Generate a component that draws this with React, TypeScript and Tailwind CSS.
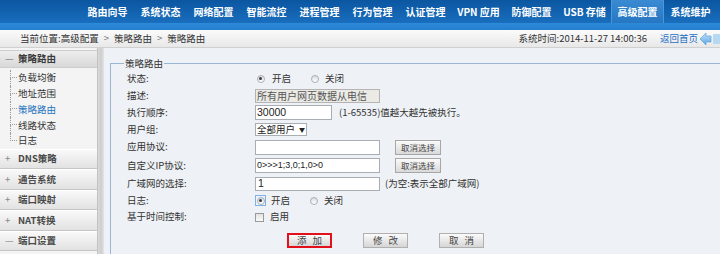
import React from 'react';

const navItems = [
  '路由向导',
  '系统状态',
  '网络配置',
  '智能流控',
  '进程管理',
  '行为管理',
  '认证管理',
  'VPN 应用',
  '防御配置',
  'USB 存储',
  '高级配置',
  '系统维护',
];

const treeItems = ['负载均衡', '地址范围', '策略路由', '线路状态', '日志'];
const sections = ['DNS策略', '通告系统', '端口映射', 'NAT转换'];

const Radio: React.FC<{ checked?: boolean; focus?: boolean }> = ({ checked, focus }) => (
  <span
    className={`flex h-[11px] w-[11px] shrink-0 items-center justify-center ${
      focus ? 'border border-[#7fb2e6] bg-[#eaf3fc]' : ''
    }`}
  >
    <span className="flex h-[8px] w-[8px] items-center justify-center rounded-full border border-[#a9b0b8] bg-gradient-to-b from-[#dcdcdc] to-[#ffffff]">
      {checked && <span className="h-[3px] w-[3px] rounded-full bg-[#3a3a3a]" />}
    </span>
  </span>
);

const Row: React.FC<{ label: string; h: string; children?: React.ReactNode }> = ({ label, h, children }) => (
  <div className={`flex items-center ${h}`}>
    <div className="w-[128px] shrink-0">{label}</div>
    <div className="flex items-center">{children}</div>
  </div>
);

const SmallButton: React.FC = () => (
  <div className="ml-[15px] flex h-[15px] w-[46px] items-center justify-center border border-[#a7a7a7] bg-gradient-to-b from-[#fbfbfb] to-[#d9d9d9] text-[8.5px] text-[#444]">
    取消选择
  </div>
);

const ActionButton: React.FC<{ a: string; b: string; active?: boolean }> = ({ a, b, active }) => (
  <div
    className={`flex h-[15px] w-[45px] items-center justify-center gap-[6px] bg-gradient-to-b from-[#fbfbfb] to-[#d6d6d6] text-[#444] ${
      active ? 'border-2 border-[#e3101b]' : 'border border-[#b0b0b0]'
    }`}
  >
    <span>{a}</span>
    <span>{b}</span>
  </div>
);

export default function App() {
  return (
    <div className="h-[254px] w-[720px] overflow-hidden bg-[#eef1f5] font-['Noto_Sans_CJK_SC',sans-serif] text-[9.5px] leading-none text-[#333]">
      {/* top nav */}
      <header>
        <div className="flex h-[23px] bg-gradient-to-b from-[#0b56a1] to-[#196ebd] pl-[81px]">
          {navItems.map((item) => (
            <div
              key={item}
              className={`flex w-[53px] shrink-0 items-center justify-center text-[10px] font-bold text-white ${
                item === '高级配置' ? 'border-x border-[#4a98dc] bg-gradient-to-b from-[#3a8bd3] to-[#2676c2]' : ''
              }`}
            >
              {item}
            </div>
          ))}
        </div>
        <div className="h-[7px] bg-gradient-to-b from-[#2d8ad8] to-[#2480cf]" />
      </header>

      {/* breadcrumb */}
      <div className="flex h-[18px] items-center border-b border-[#d0d0d0] bg-gradient-to-b from-[#fbfbfb] to-[#e8e8e8] pl-[20px]">
        <span>当前位置:高级配置</span>
        <span className="mx-[5px] text-[#777]">&gt;</span>
        <span>策略路由</span>
        <span className="mx-[5px] text-[#777]">&gt;</span>
        <span>策略路由</span>
        <span className="ml-auto">系统时间:2014-11-27 14:00:36</span>
        <span className="ml-[13px] text-[#1f6fc5]">返回首页</span>
        <svg className="ml-[2px] h-[16px] w-[20px] shrink-0" viewBox="0 0 20 16">
          <defs>
            <linearGradient id="arr" x1="0" y1="0" x2="0" y2="1">
              <stop offset="0" stopColor="#c4e2fa" />
              <stop offset="1" stopColor="#5aa6e4" />
            </linearGradient>
          </defs>
          <polygon points="0,8 6,2 6,5 11,5 11,11 6,11 6,14" fill="url(#arr)" stroke="#4f9ad8" strokeWidth="0.6" />
          <rect x="13" y="3" width="7" height="10" rx="1" fill="#a9d2f3" opacity="0.8" />
        </svg>
      </div>

      <div className="flex h-[206px]">
        {/* sidebar */}
        <aside className="w-[97px] shrink-0 bg-[#f4f4f4] pt-[2px]">
          <div className="flex h-[18px] items-center border-y border-[#cdcdcd] bg-gradient-to-b from-[#eeeeee] to-[#d8d8d8] pl-[5px] font-bold text-[#3a3a3a]">
            <span className="w-[13px] font-normal text-[#777]">—</span>
            <span>策略路由</span>
          </div>
          <ul className="pl-[10px] pt-[2px]">
            {treeItems.map((t, i) => (
              <li key={t} className="flex h-[15.8px] items-center">
                <span className="flex w-[7px] flex-col self-stretch">
                  <span className="h-1/2 border-b border-l border-dotted border-[#9a9a9a]" />
                  <span
                    className={`h-1/2 ${i === treeItems.length - 1 ? '' : 'border-l border-dotted border-[#9a9a9a]'}`}
                  />
                </span>
                <span className={`ml-[1px] ${t === '策略路由' ? 'text-[#1e72c0]' : ''}`}>{t}</span>
              </li>
            ))}
          </ul>
          {sections.map((s) => (
            <div
              key={s}
              className="flex h-[20.5px] items-center border-b border-t border-b-[#c6c6c6] border-t-white bg-gradient-to-b from-[#f9f9f9] to-[#e2e2e2] pl-[5px] font-bold text-[#4a4a4a]"
            >
              <span className="w-[13px] font-normal text-[#888]">+</span>
              <span>{s}</span>
            </div>
          ))}
          <div className="flex h-[20.5px] items-center border-b border-t border-b-[#c6c6c6] border-t-white bg-gradient-to-b from-[#f9f9f9] to-[#e2e2e2] pl-[5px] font-bold text-[#4a4a4a]">
            <span className="w-[13px] font-normal text-[#888]">—</span>
            <span>端口设置</span>
          </div>
        </aside>

        {/* splitter */}
        <div className="w-[7px] shrink-0 border-l border-[#c2c2c2] bg-gradient-to-r from-[#dadada] via-[#cdcdcd] to-[#e4e4e4]" />

        {/* content */}
        <main className="flex-1 overflow-hidden bg-[#eef1f5]">
          <fieldset className="ml-[6px] mt-[9px] w-[620px] border border-[#9ab6d5] pb-[20px]">
            <legend className="ml-[13px] px-[1px] leading-[12px]">策略路由</legend>
            <div className="pl-[16px] pt-[1px]">
              <Row label="状态:" h="h-[17px]">
                <Radio checked />
                <span className="ml-[6px]">开启</span>
                <span className="ml-[18px]"><Radio /></span>
                <span className="ml-[5px]">关闭</span>
              </Row>
              <Row label="描述:" h="h-[17px]">
                <div className="flex h-[14px] w-[125px] items-center border border-[#b4b4b4] bg-[#ebeae5] pl-[1px] text-[10px] text-[#555]">
                  所有用户网页数据从电信
                </div>
              </Row>
              <Row label="执行顺序:" h="h-[17px]">
                <div className="flex h-[15px] w-[77px] items-center border border-[#a8aeb4] bg-white pl-[1px] font-['Liberation_Sans',sans-serif] text-[10.5px] text-[#222]">
                  30000
                </div>
                <span className="ml-[7px]">(1-65535)值越大越先被执行。</span>
              </Row>
              <Row label="用户组:" h="h-[17px]">
                <div className="flex h-[13px] w-[52px] items-center border border-[#a8aeb4] bg-white pl-[1px] text-[9.5px] text-[#222]">
                  <span>全部用户</span>
                  <span className="ml-[4px] text-[6px]">▼</span>
                </div>
              </Row>
              <Row label="应用协议:" h="h-[18px]">
                <div className="h-[15px] w-[125px] border border-[#a8aeb4] bg-white" />
                <SmallButton />
              </Row>
              <Row label="自定义IP协议:" h="h-[19px]">
                <div className="flex h-[15px] w-[125px] items-center border border-[#a8aeb4] bg-white pl-[1px] font-['Liberation_Sans',sans-serif] text-[9px] text-[#222]">
                  0&gt;&gt;&gt;1;3,0;1,0&gt;0
                </div>
                <SmallButton />
              </Row>
              <Row label="广域网的选择:" h="h-[17px]">
                <div className="flex h-[14px] w-[125px] items-center border border-[#a8aeb4] bg-white pl-[2px] font-['Liberation_Sans',sans-serif] text-[10.5px] text-[#222]">
                  1
                </div>
                <span className="ml-[5px]">(为空:表示全部广域网)</span>
              </Row>
              <Row label="日志:" h="h-[17px]">
                <Radio checked focus />
                <span className="ml-[5px]">开启</span>
                <span className="ml-[18px]"><Radio /></span>
                <span className="ml-[5px]">关闭</span>
              </Row>
              <Row label="基于时间控制:" h="h-[16px]">
                <span className="h-[9px] w-[9px] border border-[#9a9a9a] bg-gradient-to-b from-[#e2e2e2] to-[#fafafa]" />
                <span className="ml-[6px]">启用</span>
              </Row>
              <div className="mt-[8px] flex gap-[31px] pl-[160px]">
                <ActionButton a="添" b="加" active />
                <ActionButton a="修" b="改" />
                <ActionButton a="取" b="消" />
              </div>
            </div>
          </fieldset>
        </main>
      </div>
    </div>
  );
}
